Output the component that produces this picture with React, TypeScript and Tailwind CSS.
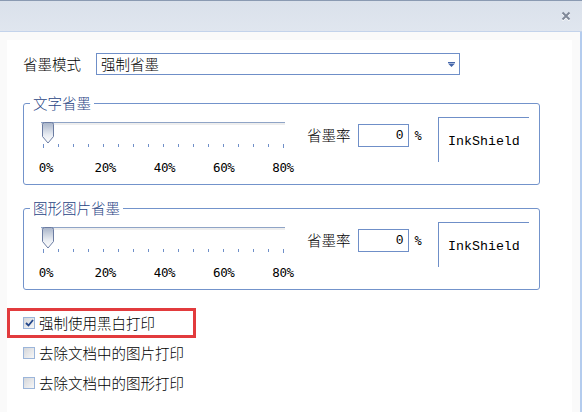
import React from 'react';

const cjk = "font-['Noto_Sans_CJK_SC','Noto_Sans',sans-serif] font-light";
const ticks = Array.from({ length: 17 }, (_, i) => i);
const labels = ['0%', '20%', '40%', '60%', '80%'];

function Thumb() {
    return (
        <svg width="14" height="22" viewBox="0 0 14 22">
            <defs>
                <linearGradient id="thumbFill" x1="0" y1="0" x2="0" y2="1">
                    <stop offset="0" stopColor="#a7b3c8" />
                    <stop offset="0.6" stopColor="#e8ecf2" />
                    <stop offset="1" stopColor="#ffffff" />
                </linearGradient>
            </defs>
            <path d="M1.5 2.5 Q1.5 0.5 3.5 0.5 H10.5 Q12.5 0.5 12.5 2.5 V14.5 L7 21 L1.5 14.5 Z" fill="url(#thumbFill)" stroke="#6b7ca2" />
        </svg>
    );
}

// Grouped slider box (legend on the border)
function InkGroup({ title }: { title: string }) {
    return (
        <div className="relative h-[82px] w-[517px] rounded-[3px] border border-[#7393cb]">
            <span className={`absolute -top-[10px] left-[6px] bg-white px-[3px] text-[14.5px] leading-[18px] text-[#1f4384] ${cjk}`}>{title}</span>
            <div className="flex items-start">
                {/* slider */}
                <div className="ml-[7px] w-[267px]">
                    <div className="relative mt-[18px] h-[22px]">
                        <div className="mt-[7px] ml-[10px] h-[3px] w-[244px] border-t border-[#8fa4c6] bg-[#eeeeee]" />
                        <div className="absolute top-0 left-[10px]">
                            <Thumb />
                        </div>
                    </div>
                    <div className="ml-[12px] flex h-[4px] w-[241px] items-start justify-between">
                        {ticks.map((t) => (
                            <div key={t} className={`w-px bg-[#6f8fc8] ${t === 0 || t === 16 ? 'h-[4px]' : 'h-[3px]'}`} />
                        ))}
                    </div>
                    <div className="mt-[13px] flex justify-between">
                        {labels.map((l) => (
                            <div key={l} className="w-[30px] text-center font-['DejaVu_Sans_Mono',monospace] text-[12.5px] leading-[14px] tracking-[-0.4px] text-black">
                                {l}
                            </div>
                        ))}
                    </div>
                </div>
                {/* rate */}
                <div className="mt-[20px] ml-[9px] flex h-[23px] w-[131px] items-center">
                    <span className={`text-[14.5px] leading-none text-black ${cjk}`}>省墨率</span>
                    <div className="ml-[7px] flex h-[23px] w-[51px] items-center justify-end border border-[#6f8fc8] pr-[4px] font-['Liberation_Mono',monospace] text-[13px] text-black">
                        0
                    </div>
                    <span className="ml-[6px] font-['DejaVu_Sans_Mono',monospace] text-[12px] text-black">%</span>
                </div>
                {/* logo box */}
                <div className="mt-[13px] flex h-[45px] w-[91px] items-center border-t border-l border-[#6f8fc8] pt-[3px] pl-[9px] font-['Liberation_Mono',monospace] text-[13.3px] text-black">
                    InkShield
                </div>
            </div>
        </div>
    );
}

function Check({ checked }: { checked?: boolean }) {
    return (
        <div className="flex h-[12px] w-[12px] items-center justify-center border border-[#9bb5da] bg-gradient-to-br from-[#d4d6da] to-[#f7f7f7]">
            {checked && (
                <svg width="9" height="8" viewBox="0 0 9 8">
                    <path d="M1 4 L3.5 6.5 L8 1" fill="none" stroke="#23468a" strokeWidth="1.8" />
                </svg>
            )}
        </div>
    );
}

export default function App() {
    return (
        <div className="flex h-[412px] w-[582px] flex-col overflow-hidden bg-[#fafafa]">
            {/* Title bar */}
            <div className="flex h-[32px] shrink-0 items-center justify-end border-t border-b border-t-[#8a9ab2] border-b-[#c3d3eb] bg-gradient-to-b from-[#dae1eb] to-[#e0e6ef] pr-[11px]">
                <svg width="10" height="10" viewBox="0 0 10 10">
                    <path d="M1.5 2.5 L8.5 9.5 M8.5 2.5 L1.5 9.5" stroke="#ffffff" strokeWidth="2" />
                    <path d="M1.5 1.5 L8.5 8.5 M8.5 1.5 L1.5 8.5" stroke="#7f8898" strokeWidth="2" />
                </svg>
            </div>

            <div className="flex flex-1 border-r-2 border-[#b4ccee] pt-[8px]">
                <div className="ml-[7px] w-[565px] bg-white">
                    <div className="pt-[13px] pl-[16px]">
                        {/* mode */}
                        <div className="flex h-[22px] items-center">
                            <span className={`w-[73px] text-[14.5px] leading-none text-black ${cjk}`}>省墨模式</span>
                            <div className="flex h-[22px] w-[364px] items-center justify-between border border-[#6f8fc8] pr-[4px] pl-[4px]">
                                <span className={`text-[14.5px] leading-none text-black ${cjk}`}>强制省墨</span>
                                <svg width="7" height="5" viewBox="0 0 7 5">
                                    <path d="M0 0 H7 V1 H0 Z M0 1.5 H7 L3.5 5 Z" fill="#4466aa" />
                                </svg>
                            </div>
                        </div>

                        <div className="mt-[28px]">
                            <InkGroup title="文字省墨" />
                        </div>
                        <div className="mt-[23px]">
                            <InkGroup title="图形图片省墨" />
                        </div>
                    </div>

                    {/* options */}
                    <div className="mt-[18px]">
                        <div className="flex h-[30px] w-[189px] items-center border-[3px] border-[#e23b3d] pl-[13px]">
                            <Check checked />
                            <span className={`ml-[4px] text-[14.5px] leading-none text-black ${cjk}`}>强制使用黑白打印</span>
                        </div>
                        <div className="flex h-[30px] items-center pl-[16px]">
                            <Check />
                            <span className={`ml-[4px] text-[14.5px] leading-none text-black ${cjk}`}>去除文档中的图片打印</span>
                        </div>
                        <div className="flex h-[30px] items-center pl-[16px]">
                            <Check />
                            <span className={`ml-[4px] text-[14.5px] leading-none text-black ${cjk}`}>去除文档中的图形打印</span>
                        </div>
                    </div>
                </div>
            </div>
        </div>
    );
}
